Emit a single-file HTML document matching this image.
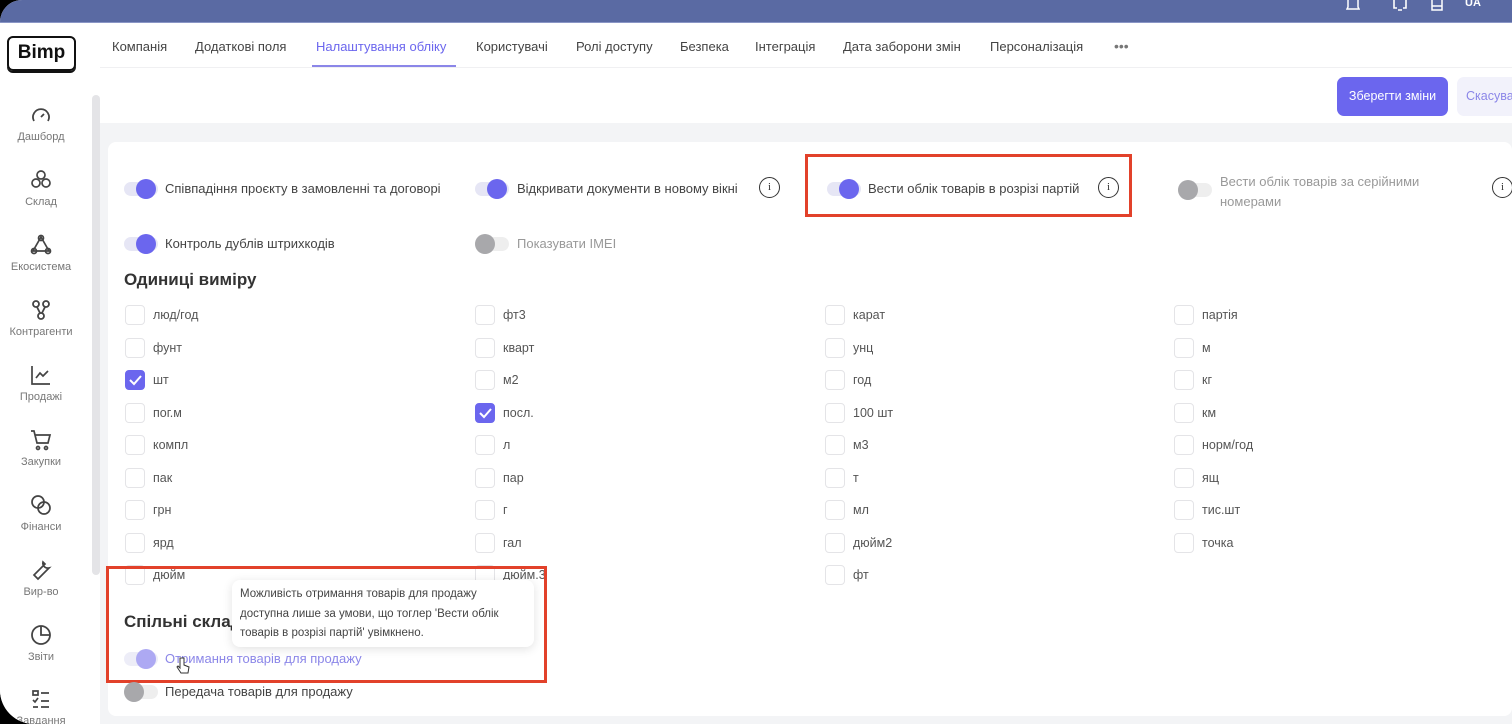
<!DOCTYPE html>
<html><head><meta charset="utf-8"><style>
*{box-sizing:border-box;margin:0;padding:0}
body{width:1512px;height:724px;overflow:hidden;background:#000;font-family:"Liberation Sans",sans-serif;position:relative}
.app{position:absolute;left:0;top:0;width:1512px;height:724px;background:#fff;border-radius:22px 0 0 34px;overflow:hidden}
.top{position:absolute;left:0;top:0;width:100%;height:23px;background:#5a6aa3;border-bottom:1px solid #8a96c6}
.side{position:absolute;left:0;top:23px;width:92px;height:701px;background:#fff}
.sb{position:absolute;left:92px;top:95px;width:8px;height:480px;background:#e4e4e7;border-radius:4px}
.logo{position:absolute;left:7px;top:13px;width:69px;height:35px;border:2.5px solid #111;border-radius:6px;box-shadow:0 2px 0 #111;font-weight:bold;font-size:19px;text-align:center;line-height:30px;color:#111}
.nav{position:absolute;left:0;width:82px;text-align:center;font-size:11px;color:#777}
.nav svg{display:block;margin:0 auto 4px}
.tabs{position:absolute;left:100px;top:23px;right:0;height:45px;border-bottom:1px solid #f0f0f2}
.tab{position:absolute;top:16px;font-size:13px;color:#444;white-space:nowrap}
.gray{position:absolute;left:100px;top:123px;right:0;bottom:0;background:#f3f4f6}
.card{position:absolute;left:108px;top:142px;right:0;bottom:8px;background:#fff;border-radius:8px}
.t{position:absolute;font-size:13px;color:#444;white-space:nowrap}
.tg{position:absolute;width:34px;height:14px;border-radius:7px;background:#e6e6f5}
.tg i{position:absolute;left:12px;top:-3px;width:20px;height:20px;border-radius:50%;background:#6b66ee}
.tg.off{background:#eee}.tg.off i{left:0;background:#a8a8ab}
.cb{position:absolute;width:20px;height:20px;border:1px solid #e4e4e7;border-radius:4px;background:#fff}
.cb.on{background:#6b66ee;border-color:#6b66ee}
.lbl{position:absolute;font-size:12.5px;color:#555}
.info{position:absolute;width:21px;height:21px;border:1.6px solid #333;border-radius:50%;font-size:11px;text-align:center;line-height:18px;color:#333;font-family:"Liberation Serif",serif}
.red{position:absolute;border:3px solid #e2412a}
h3{position:absolute;font-size:17px;color:#333;font-weight:bold}
</style></head><body><div class="app">
<div class="top">
<svg style="position:absolute;left:1346px;top:0" width="14" height="12"><path d="M2 0v7l-1 2h12l-1-2V0" fill="none" stroke="#fff" stroke-width="1.5"/></svg>
<svg style="position:absolute;left:1392px;top:0" width="16" height="12"><path d="M2 0v8h3M14 0v8h-3M6 10h4" fill="none" stroke="#fff" stroke-width="1.6"/></svg>
<svg style="position:absolute;left:1431px;top:0" width="12" height="12"><path d="M1 0v10h10V0M1 6h10" fill="none" stroke="#fff" stroke-width="1.5"/></svg>
<div style="position:absolute;left:1465px;top:-3px;color:#fff;font-weight:bold;font-size:11px">UA</div>
</div>
<div class="side">
<div class="logo">Bimp</div>
<div class="nav" style="top:82px"><svg width="22" height="22" viewBox="0 0 22 22"><path d="M4 16a8 8 0 1 1 14 0M11 12l3-3" fill="none" stroke="#444" stroke-width="1.8"/></svg>Дашборд</div>
<div class="nav" style="top:145px"><svg width="24" height="24" viewBox="0 0 24 24"><g fill="none" stroke="#444" stroke-width="1.7"><circle cx="12" cy="7" r="4"/><circle cx="7" cy="15" r="4"/><circle cx="17" cy="15" r="4"/></g></svg>Склад</div>
<div class="nav" style="top:210px"><svg width="24" height="24" viewBox="0 0 24 24"><g fill="none" stroke="#444" stroke-width="1.7"><path d="M12 4l8 14H4z"/><circle cx="12" cy="5" r="2.5"/><circle cx="5" cy="18" r="2.5"/><circle cx="19" cy="18" r="2.5"/></g></svg>Екосистема</div>
<div class="nav" style="top:275px"><svg width="24" height="24" viewBox="0 0 24 24"><g fill="none" stroke="#444" stroke-width="1.8"><circle cx="7" cy="6" r="3"/><circle cx="17" cy="6" r="3"/><circle cx="12" cy="18" r="3"/><path d="M8 9l3 6M16 9l-3 6"/></g></svg>Контрагенти</div>
<div class="nav" style="top:340px"><svg width="24" height="24" viewBox="0 0 24 24"><path d="M3 3v18h18M7 15l4-5 3 3 5-5" fill="none" stroke="#444" stroke-width="1.7"/></svg>Продажі</div>
<div class="nav" style="top:405px"><svg width="24" height="24" viewBox="0 0 24 24"><g fill="none" stroke="#444" stroke-width="1.7"><path d="M2 3h3l3 12h11l2-8H6"/><circle cx="9" cy="20" r="1.5"/><circle cx="17" cy="20" r="1.5"/></g></svg>Закупки</div>
<div class="nav" style="top:470px"><svg width="24" height="24" viewBox="0 0 24 24"><g fill="none" stroke="#444" stroke-width="1.7"><circle cx="9" cy="9" r="6"/><circle cx="15" cy="15" r="6"/></g></svg>Фінанси</div>
<div class="nav" style="top:535px"><svg width="24" height="24" viewBox="0 0 24 24"><path d="M14 4a5 5 0 0 0 6 6l-11 11-4-4 11-11z" fill="none" stroke="#444" stroke-width="1.7"/></svg>Вир-во</div>
<div class="nav" style="top:600px"><svg width="24" height="24" viewBox="0 0 24 24"><g fill="none" stroke="#444" stroke-width="1.8"><circle cx="12" cy="12" r="9"/><path d="M12 3v9h9"/></g></svg>Звіти</div>
<div class="nav" style="top:664px"><svg width="24" height="24" viewBox="0 0 24 24"><path d="M4 4h5v4H4zM12 6h8M4 13l2 2 3-4M12 14h8M4 20h5M12 20h8" fill="none" stroke="#444" stroke-width="1.7"/></svg>Завдання</div>
</div>
<div class="sb"></div>
<div class="tabs">
<div class="tab" style="left:12px">Компанія</div>
<div class="tab" style="left:95px">Додаткові поля</div>
<div class="tab" style="left:216px;color:#6b66ee">Налаштування обліку</div>
<div style="position:absolute;left:212px;top:42px;width:144px;height:2px;background:#8b86e8"></div>
<div class="tab" style="left:376px">Користувачі</div>
<div class="tab" style="left:476px">Ролі доступу</div>
<div class="tab" style="left:580px">Безпека</div>
<div class="tab" style="left:655px">Інтеграція</div>
<div class="tab" style="left:743px">Дата заборони змін</div>
<div class="tab" style="left:890px">Персоналізація</div>
<div class="tab" style="left:1014px;top:15px;font-size:14px;color:#777">•••</div>
</div>
<div style="position:absolute;left:1337px;top:77px;width:111px;height:39px;border-radius:7px;background:#6b66ee;color:#fff;font-size:12.5px;text-align:center;line-height:39px">Зберегти зміни</div>
<div style="position:absolute;left:1457px;top:77px;width:80px;height:39px;border-radius:7px;background:#f2f2fb;color:#8b86e8;font-size:12.5px;line-height:39px;padding-left:9px">Скасувати</div>
<div class="gray"></div>
<div class="card"></div>

<div class="tg" style="left:124px;top:182px"><i></i></div><div class="t" style="left:165px;top:181px">Співпадіння проєкту в замовленні та договорі</div>
<div class="tg" style="left:475px;top:182px"><i></i></div><div class="t" style="left:517px;top:181px">Відкривати документи в новому вікні</div><div class="info" style="left:759px;top:177px">i</div>
<div class="tg" style="left:827px;top:182px"><i></i></div><div class="t" style="left:868px;top:181px">Вести облік товарів в розрізі партій</div><div class="info" style="left:1098px;top:177px">i</div>
<div class="red" style="left:805px;top:154px;width:327px;height:63px"></div>
<div class="tg off" style="left:1178px;top:183px"><i></i></div><div class="t" style="left:1220px;top:172px;color:#999;line-height:20px">Вести облік товарів за серійними<br>номерами</div><div class="info" style="left:1492px;top:177px">i</div>
<div class="tg" style="left:124px;top:237px"><i></i></div><div class="t" style="left:165px;top:236px">Контроль дублів штрихкодів</div>
<div class="tg off" style="left:475px;top:237px"><i></i></div><div class="t" style="left:517px;top:236px;color:#999">Показувати IMEI</div>
<h3 style="left:124px;top:270px">Одиниці виміру</h3>

<div id="cbs"></div>
<script>
var cols=[[125,["люд/год","фунт","шт","пог.м","компл","пак","грн","ярд","дюйм"]],[475,["фт3","кварт","м2","посл.","л","пар","г","гал","дюйм.3"]],[825,["карат","унц","год","100 шт","м3","т","мл","дюйм2","фт"]],[1174,["партія","м","кг","км","норм/год","ящ","тис.шт","точка"]]];
var h="";cols.forEach(function(c){c[1].forEach(function(n,i){var y=305+i*32.5;var on=(n=="шт"||n=="посл.");h+='<div class="cb'+(on?' on':'')+'" style="left:'+c[0]+'px;top:'+y+'px">'+(on?'<svg width="18" height="18"><path d="M4 9l4 4 7-8" fill="none" stroke="#fff" stroke-width="2"/></svg>':'')+'</div><div class="lbl" style="left:'+(c[0]+28)+'px;top:'+(y+3)+'px">'+n+'</div>';});});
document.getElementById("cbs").innerHTML=h;
</script>

<h3 style="left:124px;top:612px">Спільні склади</h3>
<div style="position:absolute;left:232px;top:580px;width:302px;height:67px;background:#fff;border-radius:8px;box-shadow:0 2px 10px rgba(0,0,0,.12);font-size:11.5px;color:#444;line-height:19.5px;padding:5px 8px;white-space:nowrap">Можливість отримання товарів для продажу<br>доступна лише за умови, що тоглер 'Вести облік<br>товарів в розрізі партій' увімкнено.</div>
<div class="tg" style="left:124px;top:652px;opacity:.7"><i style="background:#8b86ee"></i></div><div class="t" style="left:165px;top:651px;color:#8b86e8">Отримання товарів для продажу</div>
<svg style="position:absolute;left:176px;top:657px" width="14" height="18"><path d="M4 1v10l-2-2-1 1 4 6h7l1-6-5-2V1z" fill="#fff" stroke="#333" stroke-width="1"/></svg>
<div class="red" style="left:106px;top:566px;width:441px;height:117px"></div>
<div class="tg off" style="left:124px;top:685px"><i></i></div><div class="t" style="left:165px;top:684px">Передача товарів для продажу</div>
</div></body></html>
